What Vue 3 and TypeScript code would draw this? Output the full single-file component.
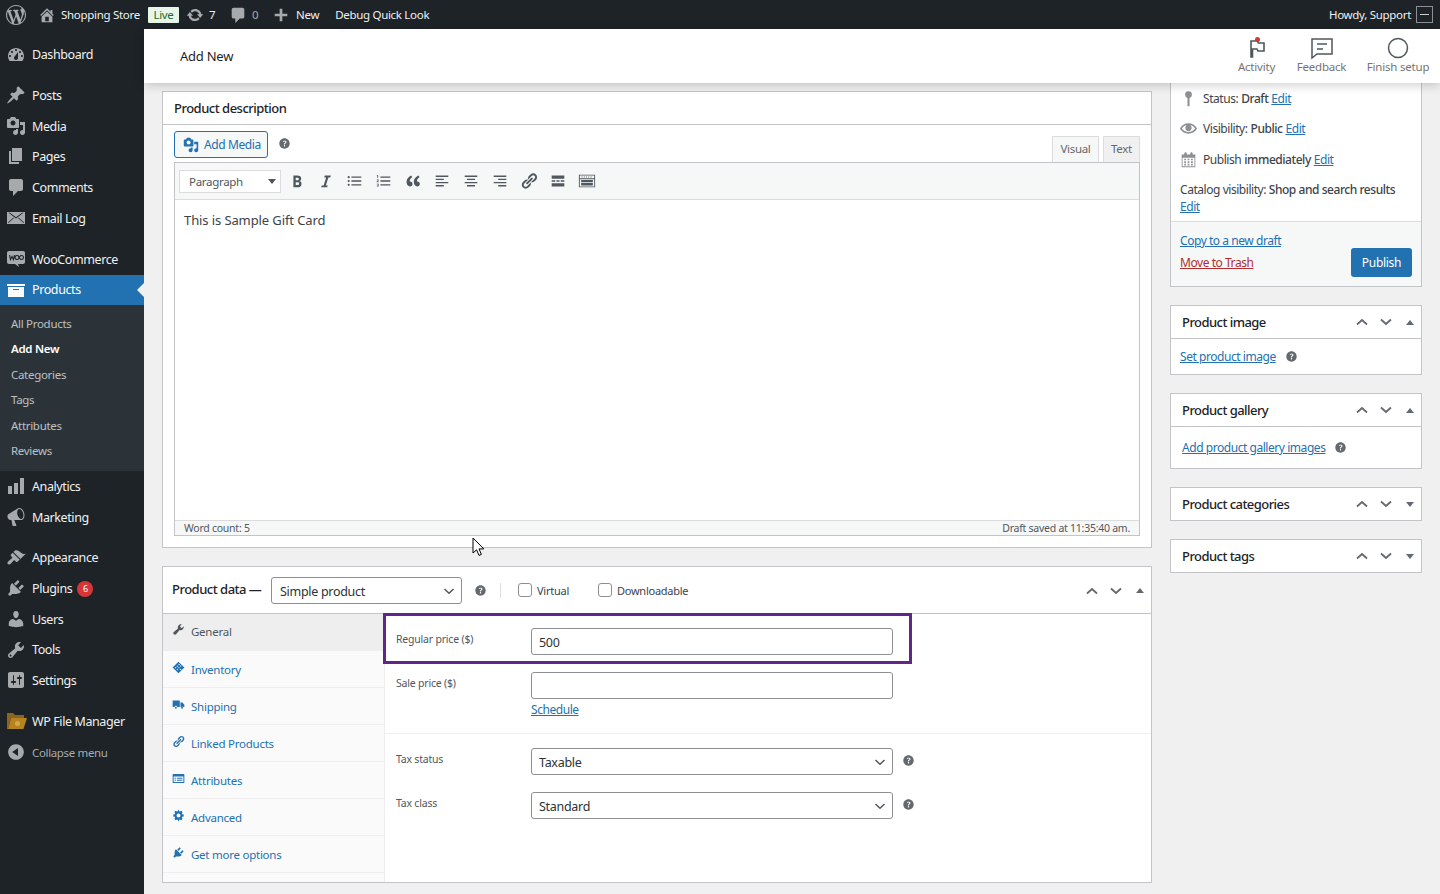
<template>
  <div class="page">
    <div class="adminbar">
      <svg class="wp-logo" viewBox="0 0 20 20"><path :d="icons.wp" /></svg>
      <svg class="bar-ico home" viewBox="0 0 20 20"><path :d="icons.home" /></svg>
      <span class="site-name">Shopping Store</span>
      <span class="live">Live</span>
      <svg class="bar-ico update" viewBox="0 0 20 20"><path :d="icons.update" /></svg>
      <span class="count">7</span>
      <svg class="bar-ico comment" viewBox="0 0 20 20"><path :d="icons.comments" /></svg>
      <span class="count dim">0</span>
      <svg class="bar-ico plus" viewBox="0 0 20 20"><path :d="icons.plus" /></svg>
      <span class="new">New</span>
      <span class="debug">Debug Quick Look</span>
      <span class="howdy">Howdy, Support</span>
      <span class="avatar"><i></i></span>
    </div>

    <div class="layout">
      <aside class="sidebar">
        <template v-for="group in menu" :key="group[0].label">
          <div class="menu-group">
            <template v-for="item in group" :key="item.label">
              <div class="menu-item" :class="{ current: item.current, faded: item.faded }">
                <svg v-if="item.icon === 'woo'" class="menu-ico" viewBox="0 0 20 20">
                  <path d="M3 2h14c1.2 0 2 .8 2 2v9c0 1.2-.8 2-2 2h-5l1 3-4-3H3c-1.2 0-2-.8-2-2V4c0-1.200.8-2 2-2z" />
                  <path class="woo-mark" d="M3.500 6l1 4.500L6 7.500l1.500 3 1-4.500M11 6.500a2 2 0 1 0 .01 0M15.500 6.500a2 2 0 1 0 .01 0" />
                </svg>
                <svg v-else-if="item.icon === 'folder'" class="menu-ico folder" viewBox="0 0 22 20">
                  <path d="M1 2h6l2 2h9v3H5l-3 11H1z" fill="#8a6420" />
                  <path d="M5 7h16l-3.500 11H2z" fill="#b5831f" />
                  <circle cx="11.500" cy="12.500" r="2.500" fill="#d4a84a" />
                </svg>
                <svg v-else class="menu-ico" viewBox="0 0 20 20"><path :d="icons[item.icon]" /></svg>
                <span>{{ item.label }}</span>
                <span v-if="item.badge" class="badge">{{ item.badge }}</span>
              </div>
              <div v-if="item.current" class="submenu">
                <div v-for="sub in submenu" :key="sub" class="sub-item" :class="{ active: sub === 'Add New' }">{{ sub }}</div>
              </div>
            </template>
          </div>
        </template>
      </aside>

      <main class="main">
        <header class="topbar">
          <h1>Add New</h1>
          <div class="top-actions">
            <div class="top-action activity">
              <svg viewBox="0 0 24 24" class="top-ico">
                <path d="M6 5h6.500l.8 2H19v8h-6l-1-2H7.500v8H6z" fill="none" stroke="#50575e" stroke-width="1.600" />
                <circle cx="12.500" cy="3.500" r="2.500" fill="#d63638" />
              </svg>
              <span>Activity</span>
            </div>
            <div class="top-action feedback">
              <svg viewBox="0 0 24 24" class="top-ico">
                <path d="M2 3h20v15H7l-5 4z" fill="none" stroke="#50575e" stroke-width="1.500" />
                <path d="M7 8h10M7 13h6" stroke="#50575e" stroke-width="1.500" />
              </svg>
              <span>Feedback</span>
            </div>
            <div class="top-action finish">
              <svg viewBox="0 0 24 24" class="top-ico">
                <circle cx="12" cy="12" r="9.500" fill="none" stroke="#50575e" stroke-width="1.500" />
              </svg>
              <span>Finish setup</span>
            </div>
          </div>
        </header>

        <div class="content">
          <div class="col-left">
            <section class="box description">
              <h2 class="box-title">Product description</h2>
              <div class="editor-wrap">
                <div class="editor-head">
                  <button class="add-media">
                    <svg viewBox="0 0 20 20"><path :d="icons.media" /></svg>
                    Add Media
                  </button>
                  <svg class="help media-help" viewBox="0 0 20 20"><path :d="icons.help" /></svg>
                  <div class="editor-tabs">
                    <span class="etab visual">Visual</span>
                    <span class="etab text">Text</span>
                  </div>
                </div>
                <div class="editor">
                  <div class="toolbar">
                    <div class="format">Paragraph<i class="tri"></i></div>
                    <span v-for="t in toolbar" :key="t" class="tool">
                      <svg viewBox="0 0 20 20"><path :d="icons[t]" /></svg>
                    </span>
                  </div>
                  <div class="editor-body">This is Sample Gift Card</div>
                  <div class="editor-status">
                    <span>Word count: 5</span>
                    <span>Draft saved at 11:35:40 am.</span>
                  </div>
                </div>
              </div>
            </section>

            <section class="box product-data">
              <div class="pd-head">
                <span class="pd-title">Product data —</span>
                <div class="fake-select type">Simple product<svg class="chev" viewBox="0 0 12 8"><path d="M1.500 2L6 6.200 10.500 2" /></svg></div>
                <svg class="help pd-help" viewBox="0 0 20 20"><path :d="icons.help" /></svg>
                <i class="pd-sep"></i>
                <label class="check"><i></i>Virtual</label>
                <label class="check"><i></i>Downloadable</label>
                <div class="handles">
                  <svg viewBox="0 0 14 8"><path d="M2 6.500l5-4.500 5 4.500" /></svg>
                  <svg viewBox="0 0 14 8"><path d="M2 1.500l5 4.500 5-4.500" /></svg>
                  <i class="up"></i>
                </div>
              </div>
              <div class="pd-body">
                <ul class="pd-tabs">
                  <li v-for="t in pdTabs" :key="t.label" :class="{ active: t.label === 'General' }">
                    <svg viewBox="0 0 20 20"><path :d="icons[t.icon]" /></svg>
                    {{ t.label }}
                  </li>
                </ul>
                <div class="pd-pane">
                  <div class="field highlighted">
                    <label>Regular price ($)</label>
                    <div class="fake-input">500</div>
                  </div>
                  <div class="field sale">
                    <label>Sale price ($)</label>
                    <div>
                      <div class="fake-input"></div>
                      <a class="schedule">Schedule</a>
                    </div>
                  </div>
                  <div class="tax">
                    <div class="field">
                      <label>Tax status</label>
                      <div class="fake-select wide">Taxable<svg class="chev" viewBox="0 0 12 8"><path d="M1.500 2L6 6.200 10.500 2" /></svg></div>
                      <svg class="help" viewBox="0 0 20 20"><path :d="icons.help" /></svg>
                    </div>
                    <div class="field">
                      <label>Tax class</label>
                      <div class="fake-select wide">Standard<svg class="chev" viewBox="0 0 12 8"><path d="M1.500 2L6 6.200 10.500 2" /></svg></div>
                      <svg class="help" viewBox="0 0 20 20"><path :d="icons.help" /></svg>
                    </div>
                  </div>
                </div>
              </div>
            </section>
          </div>

          <div class="col-right">
            <section class="box publish">
              <div class="pub-main">
                <div class="pub-row"><svg viewBox="0 0 20 20"><path :d="icons.pin" /></svg>Status: <b>Draft</b> <a>Edit</a></div>
                <div class="pub-row"><svg viewBox="0 0 20 20"><path :d="icons.eye" /></svg>Visibility: <b>Public</b> <a>Edit</a></div>
                <div class="pub-row"><svg viewBox="0 0 20 20"><path :d="icons.calendar" /></svg>Publish <b>immediately</b> <a>Edit</a></div>
                <div class="catalog">Catalog visibility: <b>Shop and search results</b><br /><a>Edit</a></div>
              </div>
              <div class="pub-foot">
                <div class="pub-links">
                  <a>Copy to a new draft</a>
                  <a class="trash">Move to Trash</a>
                </div>
                <button class="publish-btn">Publish</button>
              </div>
            </section>

            <section v-for="b in sideBoxes" :key="b.title" class="box side-box">
              <div class="side-head">
                <h2>{{ b.title }}</h2>
                <div class="handles">
                  <svg viewBox="0 0 14 8"><path d="M2 6.500l5-4.500 5 4.500" /></svg>
                  <svg viewBox="0 0 14 8"><path d="M2 1.500l5 4.500 5-4.500" /></svg>
                  <i :class="b.link ? 'up' : 'down'"></i>
                </div>
              </div>
              <div v-if="b.link" class="side-body" :class="b.cls">
                <a>{{ b.link }}</a>
                <svg class="help" viewBox="0 0 20 20"><path :d="icons.help" /></svg>
              </div>
            </section>
          </div>
        </div>
      </main>
    </div>

    <svg class="cursor" viewBox="0 0 14 20"><path d="M1 1v15l3.600-3.200 2.400 5.600 2.400-1-2.400-5.500h4.800z" fill="#fff" stroke="#000" stroke-width="1" /></svg>
  </div>
</template>

<script setup lang="ts">
type MenuItem = { label: string; icon: string; current?: boolean; badge?: string; faded?: boolean };

const icons: Record<string, string> = {
  wp: 'M20 10c0-5.510-4.490-10-10-10C4.480 0 0 4.490 0 10c0 5.520 4.480 10 10 10 5.510 0 10-4.480 10-10zM7.780 15.370L4.370 6.220c.55-.02 1.170-.08 1.170-.08.5-.06.44-1.130-.06-1.110 0 0-1.450.11-2.370.11-.18 0-.37 0-.58-.01C4.120 2.690 6.870 1.110 10 1.110c2.330 0 4.450.87 6.050 2.340-.68-.11-1.650.39-1.650 1.580 0 .74.45 1.360.9 2.100.35.61.55 1.360.55 2.460 0 1.490-1.400 5-1.400 5l-3.030-8.370c.54-.02.82-.17.82-.17.5-.05.44-1.250-.06-1.220 0 0-1.440.12-2.380.12-.87 0-2.330-.12-2.330-.12-.5-.03-.56 1.200-.06 1.220l.92.08 1.260 3.410zM17.410 10c.24-.64.74-1.870.43-4.250.7 1.290 1.050 2.710 1.050 4.250 0 3.290-1.730 6.240-4.400 7.780.97-2.590 1.940-5.200 2.920-7.780zM6.100 18.090C3.120 16.650 1.110 13.530 1.110 10c0-1.300.23-2.480.72-3.590C3.250 10.300 4.670 14.200 6.100 18.090zm4.030-6.630l2.580 6.980c-.86.29-1.760.45-2.710.45-.79 0-1.570-.11-2.290-.33.81-2.380 1.620-4.740 2.420-7.100z',
  home: 'M16 8.500l1.530 1.530-1.060 1.060L10 4.620l-6.470 6.470-1.060-1.060L10 2.500l4 4v-2h2v4zm-6-2.460l6 5.990V18H4v-5.970zM12 17v-5H8v5h4z',
  update: 'M10.200 3.280c3.530 0 6.430 2.610 6.920 6h2.080l-3.500 4-3.500-4h2.320c-.45-1.970-2.210-3.450-4.320-3.450-1.450 0-2.730.71-3.540 1.780L4.950 5.660C6.230 4.200 8.110 3.280 10.200 3.280zm-.4 13.440c-3.520 0-6.430-2.610-6.920-6H.8l3.500-4c1.170 1.330 2.330 2.670 3.500 4H5.480c.45 1.970 2.210 3.450 4.320 3.450 1.450 0 2.730-.71 3.540-1.780l1.710 1.950c-1.280 1.460-3.150 2.380-5.250 2.380z',
  comments: 'M5 2h10c1.100 0 2 .9 2 2v8c0 1.100-.9 2-2 2h-3l-5 5v-5H5c-1.100 0-2-.9-2-2V4c0-1.100.9-2 2-2z',
  plus: 'M17 8.500v3h-5.500V17h-3v-5.500H3v-3h5.500V3h3v5.500z',
  dashboard: 'M3.760 16h12.480c1.100-1.370 1.760-3.110 1.760-5 0-4.420-3.580-8-8-8s-8 3.580-8 8c0 1.890.66 3.630 1.760 5zM10 4c.55 0 1 .45 1 1s-.45 1-1 1-1-.45-1-1 .45-1 1-1zM6 6c.55 0 1 .45 1 1s-.45 1-1 1-1-.45-1-1 .45-1 1-1zm8 0c.55 0 1 .45 1 1s-.45 1-1 1-1-.45-1-1 .45-1 1-1zm-5.370 5.550L12 7v6c0 1.100-.9 2-2 2s-2-.9-2-2c0-.57.24-1.080.63-1.450zM4 10c.55 0 1 .45 1 1s-.45 1-1 1-1-.45-1-1 .45-1 1-1zm12 0c.55 0 1 .45 1 1s-.45 1-1 1-1-.45-1-1 .45-1 1-1z',
  post: 'M10.440 3.020l1.820-1.820 6.360 6.350-1.830 1.820c-1.050-.68-2.480-.57-3.410.36l-.75.75c-.92.93-1.040 2.350-.35 3.410l-1.830 1.820-2.410-2.410-2.800 2.790c-.42.42-3.380 2.710-3.800 2.290s1.860-3.390 2.280-3.810l2.790-2.790L4.100 9.360l1.830-1.820c1.050.69 2.480.57 3.400-.36l.75-.75c.93-.92 1.050-2.350.36-3.410z',
  media: 'M13 11V4c0-.55-.45-1-1-1h-1.670L9 1H5L3.670 3H2c-.55 0-1 .45-1 1v7c0 .55.45 1 1 1h10c.55 0 1-.45 1-1zM7 4.500c1.380 0 2.500 1.120 2.500 2.500S8.380 9.500 7 9.500 4.500 8.380 4.500 7 5.620 4.500 7 4.500zM14 6h5v10.500c0 1.380-1.120 2.500-2.500 2.500S14 17.880 14 16.500s1.120-2.500 2.500-2.500c.17 0 .34.02.5.05V9h-3V6zm-4 8.050V13h2v3.500c0 1.380-1.120 2.500-2.500 2.500S7 17.880 7 16.500 8.120 14 9.500 14c.17 0 .34.02.5.05z',
  page: 'M6 15V2h10v13H6zm-1 1h8v2H3V5h2v11z',
  mail: 'M1 4h18v12H1zM2.500 4.800L10 10.500l7.500-5.700h-1.300L10 9.200 3.800 4.800zM2 14.500l5.500-5 .5.5-5.500 5zM18 14.500l-5.500-5-.5.5 5.500 5z',
  archive: 'M19 4v2H1V4h18zM2 7h16v10H2V7zm11 3V9H7v1h6z',
  chart: 'M18 18V2h-4v16h4zm-6 0V7H8v11h4zm-6 0v-8H2v8h4z',
  megaphone: 'M18.150 5.940c.46 1.620.38 3.220-.02 4.480-.42 1.280-1.260 2.180-2.300 2.480-.16.06-.26.06-.4.06-.06.02-.12.02-.18.02-.06.02-.14.02-.22.02h-6.800l2.220 5.500c.02.14-.06.26-.14.34-.08.1-.24.16-.34.16H6.950c-.1 0-.26-.06-.34-.16-.08-.08-.16-.2-.14-.34l-1-5.500H4.250l-.02-.02c-.5.06-1.080-.18-1.540-.62s-.88-1.080-1.060-1.880c-.24-.8-.2-1.560-.02-2.200.18-.62.58-1.080 1.060-1.300l.02-.02 9-5.400c.1-.06.18-.1.24-.16.06-.04.14-.08.24-.12.16-.08.28-.12.44-.18 1.040-.3 2.240.1 3.220.98s1.840 2.240 2.260 3.860zm-2.580 5.980h-.02c.4-.1.74-.34 1.040-.7.58-.7.86-1.760.86-3.040-.02-.64-.1-1.300-.28-1.980-.34-1.360-1.020-2.500-1.780-3.240s-1.680-1.100-2.460-.88c-.38.12-.72.34-.98.7-.58.72-.84 1.780-.82 3.060.02.64.1 1.300.28 1.980.34 1.340 1.020 2.480 1.800 3.220.78.76 1.620 1.100 2.360.88z',
  appearance: 'M14.480 11.060L7.410 3.990l1.500-1.500c.5-.56 2.300-.47 3.510.32 1.210.8 1.430 1.280 2.910 2.100 1.180.64 2.450 1.260 4.450.85zm-.71.71L6.700 4.700 4.930 6.470c-.39.39-.39 1.020 0 1.410l1.060 1.060c.39.39.39 1.030 0 1.420-.6.6-1.430 1.110-2.210 1.690-.35.26-.7.53-1.010.84C1.430 13.710.96 15.120 1.850 16s2.300.43 3.130-.56c.14-.14.3-.31.45-.48.59-.68 1.330-1.600 2.050-2.320.39-.39 1.030-.39 1.420 0l1.060 1.060c.39.39 1.020.39 1.410 0z',
  plugin: 'M13.110 4.360L9.870 7.600 8 5.730l3.240-3.240c.35-.34 1.050-.2 1.560.32.52.51.66 1.210.31 1.550zm-8 1.770l.91-1.120 9.010 9.010-1.190.84c-.71.71-2.630 1.160-3.820 1.160H6.140L4.900 17.260c-.59.59-1.540.59-2.120 0-.59-.58-.59-1.530 0-2.120l1.240-1.240v-3.880c0-1.130.4-3.190 1.090-3.890zm7.260 3.970l3.240-3.240c.34-.35 1.040-.21 1.550.31.52.51.66 1.210.31 1.550l-3.240 3.250z',
  users: 'M10 9.250c-2.270 0-2.730-3.440-2.730-3.440C7 4.020 7.820 2 9.970 2c2.160 0 2.980 2.020 2.710 3.810 0 0-.41 3.440-2.680 3.440zm0 2.570L12.720 10c2.390 0 4.520 2.330 4.520 4.530v2.490s-3.650 1.130-7.240 1.130c-3.650 0-7.240-1.130-7.240-1.130v-2.490c0-2.250 1.940-4.480 4.470-4.480z',
  tools: 'M16.680 9.770c-1.340 1.340-3.300 1.670-4.950.99l-5.410 6.520c-.99.99-2.590.99-3.580 0s-.99-2.590 0-3.570l6.520-5.420c-.68-1.650-.35-3.610.99-4.950 1.280-1.280 3.120-1.620 4.720-1.060l-2.890 2.890 2.820 2.820 2.860-2.870c.53 1.580.18 3.390-1.080 4.650zM3.810 16.210c.4.39 1.040.39 1.430 0 .4-.4.4-1.040 0-1.430-.39-.4-1.030-.4-1.430 0-.39.39-.39 1.030 0 1.430z',
  settings: 'M18 16V4c0-1.100-.9-2-2-2H4c-1.100 0-2 .9-2 2v12c0 1.100.9 2 2 2h12c1.100 0 2-.9 2-2zM8 11h1c.55 0 1 .45 1 1s-.45 1-1 1H8v1.500c0 .28-.22.5-.5.5s-.5-.22-.5-.5V13H6c-.55 0-1-.45-1-1s.45-1 1-1h1V5.500c0-.28.22-.5.5-.5s.5.22.5.5V11zm5-2h-1c-.55 0-1-.45-1-1s.45-1 1-1h1V5.500c0-.28.22-.5.5-.5s.5.22.5.5V7h1c.55 0 1 .45 1 1s-.45 1-1 1h-1v5.500c0 .28-.22.5-.5.5s-.5-.22-.5-.5V9z',
  collapse: 'M10 2.160c4.330 0 7.840 3.510 7.840 7.840s-3.510 7.840-7.840 7.840S2.160 14.330 2.160 10 5.710 2.160 10 2.160zm2 11.720V6.120L6.180 9.970z',
  help: 'M18 10c0-4.420-3.590-8-8-8-4.420 0-8 3.580-8 8 0 4.410 3.580 8 8 8 4.410 0 8-3.590 8-8zm-7.300 1.480H9.140v-.43c0-.38.08-.7.24-.98s.46-.57.88-.89c.41-.29.68-.53.81-.71.14-.18.2-.39.2-.62 0-.25-.09-.44-.28-.58-.19-.13-.45-.19-.79-.19-.58 0-1.250.19-2 .57l-.64-1.280c.87-.49 1.800-.74 2.770-.74.81 0 1.450.2 1.920.58.48.39.71.91.71 1.550 0 .43-.09.8-.29 1.110-.19.32-.57.67-1.110 1.060-.38.28-.61.49-.71.63-.1.15-.15.34-.15.57v.35zm-1.470 2.740c-.18-.17-.27-.42-.27-.73 0-.33.08-.58.26-.75s.43-.25.77-.25c.32 0 .57.09.75.26s.27.42.27.74c0 .3-.09.55-.27.72-.18.18-.43.27-.75.27-.33 0-.58-.09-.76-.26z',
  bold: 'M6 4v13h4.540c1.370 0 2.460-.33 3.260-1 .8-.66 1.200-1.580 1.200-2.770 0-.84-.17-1.510-.51-2.010s-.9-.85-1.670-1.030v-.09c.57-.1 1.020-.4 1.360-.9s.51-1.130.51-1.910c0-1.140-.39-1.980-1.170-2.500C12.750 4.260 11.500 4 9.780 4H6zm2.570 5.150V6.260h1.360c.73 0 1.270.11 1.610.32.34.22.51.58.51 1.070 0 .54-.16.92-.47 1.150s-.82.35-1.510.35H8.570zm0 2.190h1.600c1.440 0 2.160.5 2.160 1.520 0 .57-.17.99-.5 1.270-.33.27-.85.41-1.560.41h-1.700v-3.200z',
  italic: 'M14.780 6h-2.130l-2.800 9h2.120l-.62 2H4.600l.62-2h2.140l2.800-9H8.030l.62-2h6.750z',
  ul: 'M3 4.500a1.200 1.200 0 1 1 0 2.400 1.200 1.200 0 0 1 0-2.400zm0 4.300a1.200 1.200 0 1 1 0 2.400 1.200 1.200 0 0 1 0-2.400zm0 4.300a1.200 1.200 0 1 1 0 2.400 1.200 1.200 0 0 1 0-2.400zM6 5h11v1.400H6zm0 4.300h11v1.400H6zm0 4.300h11v1.400H6z',
  ol: 'M2.500 3.500h1v3h-1v-2h-.6v-.6zM6 5h11v1.400H6zm0 4.300h11v1.400H6zm0 4.300h11v1.400H6zM2 8.300h2v1.900H3v.6h1v.6H2v-1.800h1v-.7H2zm0 4.700h2v3H2v-.6h1.200v-.6H2.500v-.5h.7v-.6H2z',
  quote: 'M9.490 13.220c0-.74-.2-1.380-.61-1.900-.62-.78-1.830-.88-2.530-.72-.29-1.650 1.110-3.750 2.920-4.650L7.880 4c-2.730 1.300-5.420 4.280-4.960 8.050C3.210 14.430 4.590 16 6.540 16c.85 0 1.560-.25 2.120-.75s.83-1.180.83-2.030zm8.050 0c0-.74-.2-1.380-.61-1.900-.63-.78-1.830-.88-2.530-.72-.29-1.650 1.110-3.750 2.920-4.650L15.940 4c-2.730 1.300-5.420 4.280-4.960 8.050.29 2.380 1.670 3.950 3.620 3.950.85 0 1.560-.25 2.120-.75s.82-1.180.82-2.030z',
  alignl: 'M3 4h14v1.500H3zm0 3.500h9V9H3zm0 3.500h14v1.500H3zm0 3.500h9V16H3z',
  alignc: 'M3 4h14v1.500H3zm2.500 3.500h9V9h-9zM3 11h14v1.500H3zm2.500 3.500h9V16h-9z',
  alignr: 'M3 4h14v1.500H3zm5 3.500h9V9H8zM3 11h14v1.500H3zm5 3.500h9V16H8z',
  link: 'M17.740 2.760c1.680 1.690 1.680 4.410 0 6.100l-1.530 1.520c-1.120 1.120-2.700 1.470-4.140 1.090l2.620-2.610.76-.77.76-.76c.84-.84.84-2.200 0-3.040-.84-.85-2.200-.85-3.040 0l-.77.76-3.380 3.380c-.37-1.440-.02-3.020 1.100-4.140l1.520-1.530c1.690-1.680 4.420-1.680 6.100 0zM8.590 13.430l5.340-5.340c.42-.42.42-1.100 0-1.520-.44-.43-1.130-.39-1.530 0l-5.330 5.340c-.42.42-.42 1.100 0 1.520.44.43 1.130.39 1.520 0zm-.76 2.290l4.140-4.150c.38 1.440.03 3.020-1.090 4.140l-1.520 1.530c-1.690 1.680-4.410 1.680-6.100 0-1.680-1.680-1.680-4.420 0-6.100l1.530-1.520c1.120-1.120 2.700-1.470 4.140-1.100l-4.140 4.150c-.85.84-.85 2.200 0 3.050.84.84 2.200.84 3.040 0z',
  more: 'M3 4h14v3.500H3zm0 5.300h4v1.400H3zm5.300 0h3.400v1.400H8.300zm4.700 0h4v1.400h-4zM3 12.500h14V16H3z',
  kitchen: 'M1 3h18v14H1zM2 4v3h16V4zM2 8v8h16V8zM4 5h1v1H4zm2.500 0h1v1h-1zm2.500 0h1v1H9zm2.500 0h1v1h-1zm2.500 0h1v1h-1zM3.500 9h13v2h-13zm0 3h13v3h-13z',
  wrench: 'M16.680 9.770c-1.340 1.340-3.300 1.670-4.950.99l-5.410 6.520c-.99.99-2.590.99-3.580 0s-.99-2.590 0-3.570l6.520-5.420c-.68-1.650-.35-3.610.99-4.950 1.280-1.280 3.120-1.620 4.720-1.060l-2.890 2.890 2.820 2.820 2.860-2.870c.53 1.580.18 3.390-1.080 4.650z',
  inventory: 'M10 1L19 10 10 19 1 10zM7 8l1.200-1.200L9.400 8 8.200 9.200zm2.800-2.800L11 4l1.200 1.200L11 6.400zM9.500 10.500l1.200-1.200 1.200 1.200-1.200 1.200zm2.800-2.800l1.200-1.200 1.200 1.200-1.200 1.200zM12 13l1.200-1.200 1.200 1.200-1.200 1.200zM4.500 10.500l1.200-1.200 1.200 1.200-1.200 1.200zM7 13l1.200-1.200 1.200 1.200-1.200 1.200z',
  truck: 'M1 4h11v10H8a2 2 0 0 0-4 0H1zm12 3h3l3 3.500V14h-1.500a2 2 0 0 0-3.500 0H13zM6 13.500a1.500 1.500 0 1 1 0 3 1.500 1.500 0 0 1 0-3zm9.500 0a1.500 1.500 0 1 1 0 3 1.500 1.500 0 0 1 0-3z',
  card: 'M2 3h16c.6 0 1 .4 1 1v12c0 .6-.4 1-1 1H2c-.6 0-1-.4-1-1V4c0-.6.4-1 1-1zm.5 4v8.500h15V7zM4 9h2v1.500H4zm3.500 0H16v1.500H7.500zM4 12h2v1.500H4zm3.500 0H16v1.500H7.500z',
  gear: 'M18 11.500v-3l-2.300-.5c-.1-.5-.3-.9-.6-1.300l1.300-2-2.100-2.100-2 1.300c-.4-.3-.8-.5-1.300-.6L10.500 1h-1l-.5 2.300c-.5.1-.9.3-1.300.6l-2-1.300L3.600 4.700l1.300 2c-.3.4-.5.8-.6 1.300L2 8.500v3l2.300.5c.1.5.3.9.6 1.300l-1.300 2 2.100 2.100 2-1.300c.4.3.8.5 1.300.6l.5 2.300h1l.5-2.300c.5-.1.9-.3 1.300-.6l2 1.300 2.100-2.100-1.300-2c.3-.4.5-.8.6-1.300zM10 7a3 3 0 1 1 0 6 3 3 0 0 1 0-6z',
  pin: 'M10 1.500a4 4 0 0 1 4 4c0 1.800-1.200 3.300-2.800 3.800V19h-2.400V9.300A4 4 0 0 1 6 5.500a4 4 0 0 1 4-4z',
  eye: 'M19.700 9.400C17.700 6 14 3.900 10 3.900S2.300 6 .3 9.400L0 10l.3.6c2 3.400 5.700 5.500 9.700 5.500s7.700-2.100 9.700-5.500l.3-.6zM10 14.100c-3.100 0-6-1.600-7.700-4.100C3.600 8 5.600 6.500 7.800 6.200 6.900 7 6.300 8.100 6.300 9.400c0 2 1.700 3.700 3.700 3.700s3.700-1.700 3.700-3.700c0-1.300-.6-2.400-1.500-3.200 2.200.3 4.200 1.800 5.500 3.800-1.700 2.500-4.600 4.100-7.700 4.100z',
  calendar: 'M15 4h3v15H2V4h3V3c0-.41.15-.76.44-1.060.29-.29.65-.44 1.060-.44s.77.15 1.060.44c.29.300.44.65.44 1.060v1h4V3c0-.41.15-.76.44-1.060.29-.29.65-.44 1.060-.44s.77.15 1.060.44c.29.300.44.65.44 1.060v1zM17 18V8H3v10h14zM7 9v2H5V9h2zm2 0h2v2H9V9zm4 2V9h2v2h-2zm-6 1v2H5v-2h2zm2 0h2v2H9v-2zm4 2v-2h2v2h-2zm-6 1v2H5v-2h2zm4 2H9v-2h2v2zm4 0h-2v-2h2v2z',
};

const menu: MenuItem[][] = [
  [{ label: 'Dashboard', icon: 'dashboard' }],
  [
    { label: 'Posts', icon: 'post' },
    { label: 'Media', icon: 'media' },
    { label: 'Pages', icon: 'page' },
    { label: 'Comments', icon: 'comments' },
    { label: 'Email Log', icon: 'mail' },
  ],
  [
    { label: 'WooCommerce', icon: 'woo' },
    { label: 'Products', icon: 'archive', current: true },
    { label: 'Analytics', icon: 'chart' },
    { label: 'Marketing', icon: 'megaphone' },
  ],
  [
    { label: 'Appearance', icon: 'appearance' },
    { label: 'Plugins', icon: 'plugin', badge: '6' },
    { label: 'Users', icon: 'users' },
    { label: 'Tools', icon: 'tools' },
    { label: 'Settings', icon: 'settings' },
  ],
  [
    { label: 'WP File Manager', icon: 'folder' },
    { label: 'Collapse menu', icon: 'collapse', faded: true },
  ],
];

const submenu = ['All Products', 'Add New', 'Categories', 'Tags', 'Attributes', 'Reviews'];

const toolbar = ['bold', 'italic', 'ul', 'ol', 'quote', 'alignl', 'alignc', 'alignr', 'link', 'more', 'kitchen'];

const pdTabs = [
  { label: 'General', icon: 'wrench' },
  { label: 'Inventory', icon: 'inventory' },
  { label: 'Shipping', icon: 'truck' },
  { label: 'Linked Products', icon: 'link' },
  { label: 'Attributes', icon: 'card' },
  { label: 'Advanced', icon: 'gear' },
  { label: 'Get more options', icon: 'plugin' },
];

const sideBoxes = [
  { title: 'Product image', link: 'Set product image', cls: 'image' },
  { title: 'Product gallery', link: 'Add product gallery images', cls: 'gallery' },
  { title: 'Product categories' },
  { title: 'Product tags' },
];
</script>

<style>
html, body { margin: 0; background: #f0f0f1; }
</style>

<style scoped>
.page {
  position: relative;
  width: 1440px;
  height: 894px;
  overflow: hidden;
  display: flex;
  flex-direction: column;
  background: #f0f0f1;
  font-family: "Noto Sans", "Open Sans", sans-serif;
  font-size: 12px;
  letter-spacing: -0.45px;
  color: #3c434a;
}
a { color: #2271b1; text-decoration: underline; }
svg { display: block; flex: none; }
path { fill-rule: evenodd; }
h1, h2 { margin: 0; font-weight: 400; }

/* admin bar */
.adminbar {
  height: 29px;
  flex: none;
  display: flex;
  align-items: center;
  background: #1d2327;
  color: #f0f0f1;
  font-size: 11.500px;
  letter-spacing: -0.3px;
}
.adminbar svg { fill: #a7aaad; }
.wp-logo { width: 20px; height: 20px; margin-left: 6px; }
.bar-ico { width: 18px; height: 18px; }
.home { margin-left: 12px; }
.site-name { margin-left: 5px; width: 80px; white-space: nowrap; }
.live {
  margin-left: 7px;
  width: 31px;
  height: 16px;
  line-height: 15px;
  text-align: center;
  background: #e8f5e9;
  color: #1e6b30;
  border-radius: 1px;
}
.update { margin-left: 7px; }
.count { margin-left: 5px; width: 8px; }
.count.dim { color: #a7aaad; }
.comment { margin-left: 12px; }
.plus { margin-left: 12px; }
.new { margin-left: 6px; }
.debug { margin-left: 16px; }
.howdy { margin-left: auto; }
.avatar {
  width: 15px;
  height: 15px;
  margin: 0 7px 0 5px;
  border: 1px solid #8c8f94;
  display: flex;
  align-items: center;
  justify-content: center;
}
.avatar i { width: 9px; height: 1px; background: #ccc; }

.layout { flex: 1; display: flex; min-height: 0; }

/* sidebar */
.sidebar {
  width: 144px;
  flex: none;
  background: #1d2327;
  padding-top: 10.500px;
  color: #f0f0f1;
  font-size: 12.500px;
  letter-spacing: -0.4px;
}
.menu-group { margin-bottom: 10px; }
.menu-group:nth-child(1) { margin-bottom: 9.800px; }
.menu-group:nth-child(2) { margin-bottom: 10.400px; }
.menu-group:nth-child(3) { margin-bottom: 10.200px; }
.menu-item {
  position: relative;
  height: 30.700px;
  display: flex;
  align-items: center;
  padding-left: 32px;
}
.menu-ico {
  position: absolute;
  left: 6px;
  top: 5px;
  width: 20px;
  height: 20px;
  fill: #a7aaad;
}
.menu-ico.folder { left: 6px; width: 22px; }
.woo-mark { fill: none; stroke: #1d2327; stroke-width: 1.100px; }
.menu-item.current { background: #2271b1; color: #fff; }
.menu-item.current .menu-ico { fill: #fff; }
.menu-item.current::after {
  content: "";
  position: absolute;
  right: 0;
  top: 8px;
  border: 7px solid transparent;
  border-right-color: #f0f0f1;
  border-left: 0;
}
.menu-item.faded { color: #a7aaad; font-size: 11.500px; letter-spacing: -0.35px; }
.badge {
  margin-left: 5px;
  width: 16px;
  height: 16px;
  border-radius: 50%;
  background: #d63638;
  color: #fff;
  font-size: 9px;
  line-height: 16px;
  text-align: center;
}
.submenu {
  background: #2c3338;
  padding: 5.650px 0 7.150px;
}
.sub-item {
  height: 25.500px;
  line-height: 25.500px;
  padding-left: 11px;
  font-size: 11.500px;
  letter-spacing: -0.3px;
  color: #bcc0c4;
}
.sub-item.active { color: #fff; font-weight: 600; }

/* main area */
.main { flex: 1; display: flex; flex-direction: column; min-width: 0; }
.topbar {
  position: relative;
  z-index: 2;
  height: 54px;
  flex: none;
  display: flex;
  align-items: center;
  justify-content: space-between;
  background: #fff;
  box-shadow: 0 2px 10px rgba(0, 0, 0, 0.2);
}
.topbar h1 { font-size: 13px; letter-spacing: -0.25px; color: #1e1e1e; margin-left: 36px; }
.top-actions { display: flex; height: 100%; padding-right: 6px; }
.top-action {
  display: flex;
  flex-direction: column;
  align-items: center;
  justify-content: flex-start;
  padding-top: 7px;
  color: #757575;
  font-size: 11.500px;
  letter-spacing: -0.2px;
}
.top-action span { margin-top: -1px; white-space: nowrap; }
.top-ico { width: 24px; height: 24px; }
.top-action.activity { width: 65px; }
.top-action.feedback { width: 65px; }
.top-action.finish { width: 72px; margin-left: 8px; }

.content {
  flex: 1;
  min-height: 0;
  display: flex;
  gap: 18px;
  padding-left: 18px;
}
.col-left { width: 990px; padding-top: 8px; display: flex; flex-direction: column; gap: 18px; }
.col-right { width: 252px; display: flex; flex-direction: column; gap: 18px; }
.box { background: #fff; border: 1px solid #c3c4c7; box-sizing: border-box; }

/* description box */
.box-title {
  height: 33px;
  line-height: 33px;
  padding-left: 11px;
  font-size: 13px;
  letter-spacing: -0.5px;
  font-weight: 500;
  color: #1d2327;
  border-bottom: 1px solid #c3c4c7;
  box-sizing: border-box;
}
.editor-wrap { padding: 6px 11px 11px; }
.editor-head { display: flex; align-items: flex-start; height: 31px; }
.add-media {
  width: 94px;
  height: 27px;
  display: flex;
  align-items: center;
  gap: 5px;
  padding: 0 0 0 8px;
  font: inherit;
  letter-spacing: -0.4px;
  color: #2271b1;
  background: #f6f7f7;
  border: 1px solid #2271b1;
  border-radius: 3px;
  box-sizing: border-box;
}
.add-media svg { width: 16px; height: 16px; fill: #2271b1; }
.help { width: 13px; height: 13px; fill: #646970; }
.media-help { margin: 6px 0 0 10px; }
.editor-tabs { margin-left: auto; display: flex; gap: 4px; align-self: flex-end; }
.etab {
  height: 26px;
  line-height: 24px;
  text-align: center;
  background: #f0f0f1;
  border: 1px solid #dcdcde;
  border-bottom: 0;
  box-sizing: border-box;
  color: #646970;
  font-size: 11.500px;
  letter-spacing: -0.3px;
}
.etab.visual { width: 47px; background: #f6f7f7; }
.etab.text { width: 37px; }
.editor { border: 1px solid #c3c4c7; }
.toolbar {
  height: 36px;
  display: flex;
  align-items: center;
  padding-left: 4px;
  background: #f6f7f7;
  border-bottom: 1px solid #dcdcde;
}
.format {
  width: 102px;
  height: 23px;
  margin-right: 1px;
  padding-left: 9px;
  display: flex;
  align-items: center;
  justify-content: space-between;
  background: #fff;
  border: 1px solid #dcdcde;
  box-sizing: border-box;
  color: #50575e;
  font-size: 11.500px;
  letter-spacing: -0.3px;
}
.tri {
  margin-right: 4px;
  border: 4px solid transparent;
  border-top: 5px solid #50575e;
  border-bottom: 0;
}
.tool { width: 29px; display: flex; justify-content: center; }
.tool svg { width: 18px; height: 18px; fill: #50575e; }
.editor-body {
  height: 320px;
  padding: 11px 9px;
  box-sizing: border-box;
  font-size: 13px;
  color: #3c434a;
  letter-spacing: -0.1px;
}
.editor-status {
  height: 14px;
  display: flex;
  justify-content: space-between;
  align-items: center;
  padding: 0 9px;
  background: #f6f7f7;
  border-top: 1px solid #dcdcde;
  font-size: 10.500px;
  letter-spacing: -0.25px;
  color: #50575e;
}

/* product data */
.product-data { height: 317px; display: flex; flex-direction: column; }
.pd-head {
  height: 47px;
  flex: none;
  display: flex;
  align-items: center;
  padding: 1px 0 0 9px;
  box-sizing: border-box;
  border-bottom: 1px solid #c3c4c7;
}
.pd-title { font-size: 13px; letter-spacing: -0.5px; font-weight: 500; color: #1d2327; width: 99px; margin-top: -3px; }
.fake-select, .fake-input {
  height: 27px;
  box-sizing: border-box;
  display: flex;
  align-items: center;
  justify-content: space-between;
  padding: 2px 6px 0 8px;
  border: 1px solid #8c8f94;
  border-radius: 3px;
  background: #fff;
  font-size: 12.500px;
  letter-spacing: -0.3px;
  color: #2c3338;
}
.fake-select.type { width: 191px; }
.chev { width: 12px; height: 8px; fill: none; stroke: #50575e; stroke-width: 1.500; margin-top: -2px; }
.pd-help { margin-left: 12px; }
.pd-sep { width: 1px; height: 15px; margin: 0 17px 0 13px; background: #dcdcde; }
.check {
  display: flex;
  align-items: center;
  width: 80px;
  margin-top: -1px;
  font-size: 11px;
  letter-spacing: -0.25px;
  color: #3c434a;
  white-space: nowrap;
}
.check i {
  width: 12px;
  height: 12px;
  margin-right: 5px;
  border: 1px solid #8c8f94;
  border-radius: 3px;
  flex: none;
}
.pd-head .handles { margin-left: auto; padding-right: 7px; }
.handles { display: flex; align-items: center; gap: 10px; }
.handles svg { width: 14px; height: 8px; fill: none; stroke: #646970; stroke-width: 1.800; }
.handles i { width: 0; height: 0; margin-left: 3px; border: 4px solid transparent; }
.handles i.up { border-top: 0; border-bottom: 5px solid #646970; }
.handles i.down { border-bottom: 0; border-top: 5px solid #646970; }

.pd-body { flex: 1; display: flex; min-height: 0; }
.pd-tabs {
  width: 222px;
  flex: none;
  margin: 0;
  padding: 0 0 10px;
  list-style: none;
  background: #fafafa;
  box-sizing: border-box;
  border-right: 1px solid #eee;
}
.pd-tabs li {
  height: 37px;
  box-sizing: border-box;
  display: flex;
  align-items: center;
  gap: 6px;
  padding: 1px 0 0 9px;
  border-bottom: 1px solid #eee;
  color: #2271b1;
  font-size: 11.500px;
  letter-spacing: -0.25px;
}
.pd-tabs li svg { width: 13px; height: 13px; fill: #2271b1; margin-top: -4px; }
.pd-tabs li.active { background: #eee; color: #50575e; border-bottom: 0; padding: 0 0 2px 9px; }
.pd-tabs li.active svg { fill: #50575e; }
.pd-pane { flex: 1; }
.field { display: flex; align-items: flex-start; }
.field label {
  width: 135px;
  flex: none;
  margin-top: 4px;
  font-size: 10.500px;
  letter-spacing: -0.2px;
  color: #50575e;
}
.field .fake-input { width: 362px; padding-left: 7px; }
.field .fake-select.wide { width: 362px; padding-left: 7px; }
.field .help { margin: 6px 0 0 9px; }
.highlighted {
  position: relative;
  width: 529px;
  height: 51px;
  box-sizing: border-box;
  margin: -1px 0 0 -2px;
  padding: 12px 0 0 10px;
  border: 3px solid #5f2787;
  background: #fff;
}
.sale { padding: 8px 0 0 11px; height: 70px; border-bottom: 1px solid #eee; box-sizing: border-box; }
.schedule { display: block; margin-top: 2px; }
.tax { padding: 14px 0 0 11px; display: flex; flex-direction: column; gap: 17px; }

/* publish box */
.publish { height: 204px; border-top: 0; }
.pub-main { height: 139px; padding: 0 9px; box-sizing: border-box; border-bottom: 1px solid #dcdcde; }
.pub-row { position: relative; display: flex; gap: 3px; align-items: center; padding-left: 23px; height: 31px; }
.pub-row:first-child { height: 30px; }
.pub-row b, .catalog b { font-weight: 500; }
.pub-row svg { position: absolute; left: 0; top: 7px; width: 17px; height: 17px; fill: #8c8f94; }
.catalog { padding-top: 6px; line-height: 17px; }
.pub-foot {
  height: 64px;
  display: flex;
  justify-content: space-between;
  background: #f6f7f7;
  padding: 10px 9px 0;
  box-sizing: border-box;
}
.pub-links { display: flex; flex-direction: column; gap: 5px; line-height: 17px; }
.trash { color: #b32d2e; }
.publish-btn {
  width: 61px;
  height: 29px;
  margin-top: 16px;
  border: 0;
  border-radius: 3px;
  background: #2271b1;
  color: #fff;
  font: inherit;
  letter-spacing: -0.3px;
}

/* side boxes */
.side-head {
  height: 32px;
  display: flex;
  align-items: center;
  justify-content: space-between;
  padding: 0 7px 0 11px;
}
.side-head h2 { font-size: 13px; letter-spacing: -0.55px; font-weight: 500; color: #1d2327; }
.side-body {
  display: flex;
  align-items: center;
  border-top: 1px solid #c3c4c7;
  padding-left: 9px;
  gap: 9px;
}
.side-body.image { height: 35px; }
.side-body.gallery { height: 41px; padding-left: 11px; }
.cursor { position: absolute; left: 472px; top: 537px; width: 14px; height: 20px; }
</style>
